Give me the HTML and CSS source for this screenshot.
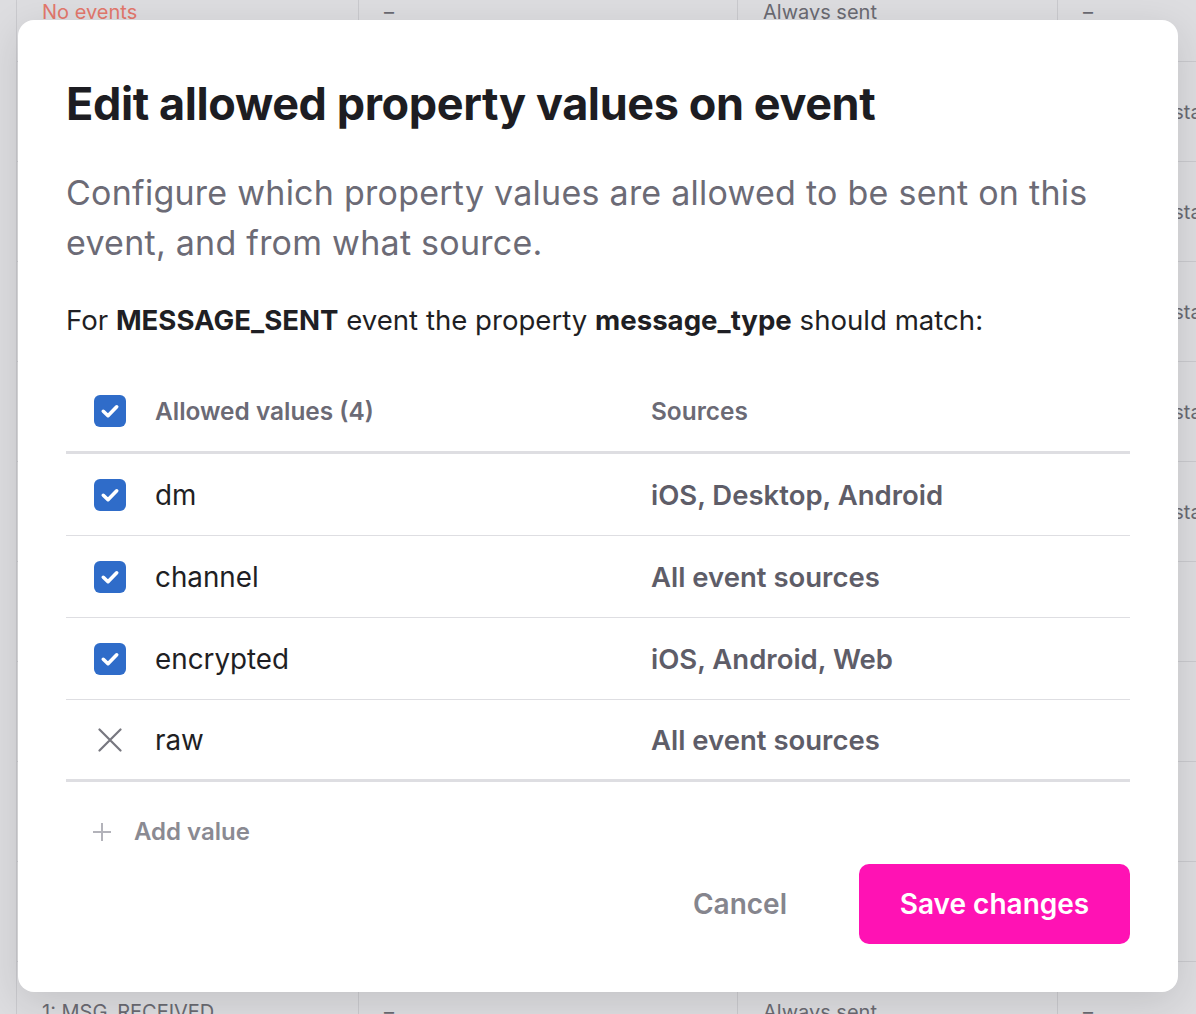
FILE: index.html
```html
<!DOCTYPE html>
<html>
<head>
<meta charset="utf-8">
<link rel="stylesheet" href="styles.css">
</head>
<body>
<div class="bg-table">
  <div class="bg-row"><div class="c c1 red">No events</div><div class="c c2">–</div><div class="c c3">Always sent</div><div class="c c4">–</div></div>
  <div class="bg-row"><div class="c c1"></div><div class="c c2"></div><div class="c c3"></div><div class="c c4">Optional, stable</div></div>
  <div class="bg-row"><div class="c c1"></div><div class="c c2"></div><div class="c c3"></div><div class="c c4">Optional, stable</div></div>
  <div class="bg-row"><div class="c c1"></div><div class="c c2"></div><div class="c c3"></div><div class="c c4">Optional, stable</div></div>
  <div class="bg-row"><div class="c c1"></div><div class="c c2"></div><div class="c c3"></div><div class="c c4">Optional, stable</div></div>
  <div class="bg-row"><div class="c c1"></div><div class="c c2"></div><div class="c c3"></div><div class="c c4">Optional, stable</div></div>
  <div class="bg-row"><div class="c c1"></div><div class="c c2"></div><div class="c c3"></div><div class="c c4"></div></div>
  <div class="bg-row"><div class="c c1"></div><div class="c c2"></div><div class="c c3"></div><div class="c c4"></div></div>
  <div class="bg-row"><div class="c c1"></div><div class="c c2"></div><div class="c c3"></div><div class="c c4"></div></div>
  <div class="bg-row"><div class="c c1"></div><div class="c c2"></div><div class="c c3"></div><div class="c c4"></div></div>
  <div class="bg-row"><div class="c c1">1: MSG_RECEIVED</div><div class="c c2">–</div><div class="c c3">Always sent</div><div class="c c4">–</div></div>
</div>

<div class="modal">
  <h1 class="title">Edit allowed property values on event</h1>
  <p class="subtitle">Configure which property values are allowed to be sent on this event, and from what source.</p>
  <p class="lead">For <b>MESSAGE_SENT</b> event the property <b>message_type</b> should match:</p>

  <div class="vtable">
    <div class="vrow head">
      <span class="cb"><svg viewBox="0 0 32 32"><path d="M9.3 16.3l4.7 4.4 8.7-8.9" fill="none" stroke="#fff" stroke-width="3.6" stroke-linecap="round" stroke-linejoin="round"/></svg></span>
      <span class="name">Allowed values (4)</span>
      <span class="src">Sources</span>
    </div>
    <div class="vrow">
      <span class="cb"><svg viewBox="0 0 32 32"><path d="M9.3 16.3l4.7 4.4 8.7-8.9" fill="none" stroke="#fff" stroke-width="3.6" stroke-linecap="round" stroke-linejoin="round"/></svg></span>
      <span class="name">dm</span>
      <span class="src">iOS, Desktop, Android</span>
    </div>
    <div class="vrow">
      <span class="cb"><svg viewBox="0 0 32 32"><path d="M9.3 16.3l4.7 4.4 8.7-8.9" fill="none" stroke="#fff" stroke-width="3.6" stroke-linecap="round" stroke-linejoin="round"/></svg></span>
      <span class="name">channel</span>
      <span class="src">All event sources</span>
    </div>
    <div class="vrow">
      <span class="cb"><svg viewBox="0 0 32 32"><path d="M9.3 16.3l4.7 4.4 8.7-8.9" fill="none" stroke="#fff" stroke-width="3.6" stroke-linecap="round" stroke-linejoin="round"/></svg></span>
      <span class="name">encrypted</span>
      <span class="src">iOS, Android, Web</span>
    </div>
    <div class="vrow last">
      <span class="xmark"><svg viewBox="0 0 24 24"><path d="M1.5 1.5l21 21M22.5 1.5l-21 21" fill="none" stroke="#77777f" stroke-width="2.2" stroke-linecap="round"/></svg></span>
      <span class="name">raw</span>
      <span class="src">All event sources</span>
    </div>
  </div>

  <div class="add">
    <svg class="plus" viewBox="0 0 20 20"><path d="M10 1v18M1 10h18" stroke="#b3b3ba" stroke-width="2" fill="none"/></svg>
    <span>Add value</span>
  </div>

  <div class="actions">
    <button class="cancel">Cancel</button>
    <button class="save">Save changes</button>
  </div>
</div>
</body>
</html>
```

FILE: styles.css
```css
* { box-sizing: border-box; }
html, body { margin: 0; padding: 0; }
body {
  width: 1196px;
  height: 1014px;
  overflow: hidden;
  background: #dddde0;
  font-family: "Inter", "Liberation Sans", sans-serif;
  position: relative;
}

/* background table */
.bg-table {
  margin-top: -38px;
  margin-left: 16px;
  border-left: 1px solid #cacace;
}
.bg-row {
  display: grid;
  grid-template-columns: 342px 379px 320px 300px;
  height: 100px;
  border-bottom: 1px solid #cacace;
}
.c {
  display: flex;
  align-items: center;
  padding-left: 25px;
  font-size: 20px;
  color: #6a6a72;
  border-right: 1px solid #cacace;
  white-space: nowrap;
  overflow: hidden;
}
.c.red { color: #e3776c; }

/* modal */
.modal {
  position: absolute;
  left: 18px;
  top: 20px;
  width: 1160px;
  height: 972px;
  background: #fff;
  border-radius: 16px;
  box-shadow: 0 10px 40px rgba(0,0,0,0.12);
  padding: 48px;
  color: #1f1f24;
}
.title {
  margin: 8px 0 0 0;
  font-size: 45px;
  line-height: 56px;
  font-weight: 700;
  letter-spacing: -0.4px;
  color: #1d1d22;
}
.subtitle {
  margin: 36px 0 0 0;
  font-size: 34px;
  line-height: 50px;
  font-weight: 400;
  letter-spacing: 0.25px;
  color: #6c6b76;
  max-width: 1064px;
}
.lead {
  margin: 34px 0 0 0;
  font-size: 27.6px;
  line-height: 36px;
  color: #1f1f24;
}
.lead b { font-weight: 700; }

.vtable {
  margin-top: 32px;
}
.vrow {
  display: flex;
  align-items: center;
  height: 82px;
  border-bottom: 1px solid #dedee2;
  padding-left: 28px;
}
.vrow.head {
  height: 84px;
  border-bottom: 3px solid #dedee2;
}
.vrow.last { border-bottom: 3px solid #dedee2; }
.cb {
  width: 32px;
  height: 32px;
  border-radius: 6px;
  background: #2f6cc9;
  flex: none;
  display: flex;
}
.cb svg { width: 32px; height: 32px; }
.xmark { width: 32px; height: 32px; flex: none; display: flex; padding: 4px; }
.xmark svg { width: 24px; height: 24px; }
.name {
  margin-left: 29px;
  width: 496px;
  font-size: 27.8px;
  color: #1f1f24;
}
.src {
  font-size: 27.5px;
  font-weight: 600;
  color: #5e5d68;
}
.head .name, .head .src {
  font-size: 24.4px;
  font-weight: 600;
  color: #6b6a75;
}

.add {
  display: flex;
  align-items: center;
  height: 65px;
  margin-top: 17px;
  padding-left: 26px;
}
.plus { width: 20px; height: 20px; }
.add span {
  margin-left: 22px;
  font-size: 24px;
  font-weight: 600;
  color: #8a8a92;
}

.actions {
  display: flex;
  justify-content: flex-end;
  align-items: center;
  gap: 72px;
}
button {
  font-family: inherit;
  border: none;
  cursor: pointer;
}
.cancel {
  background: none;
  font-size: 28px;
  font-weight: 600;
  color: #85858d;
  padding: 0;
}
.save {
  width: 271px;
  height: 80px;
  border-radius: 10px;
  background: #ff12b4;
  color: #fff;
  font-size: 28px;
  font-weight: 600;
}
```
